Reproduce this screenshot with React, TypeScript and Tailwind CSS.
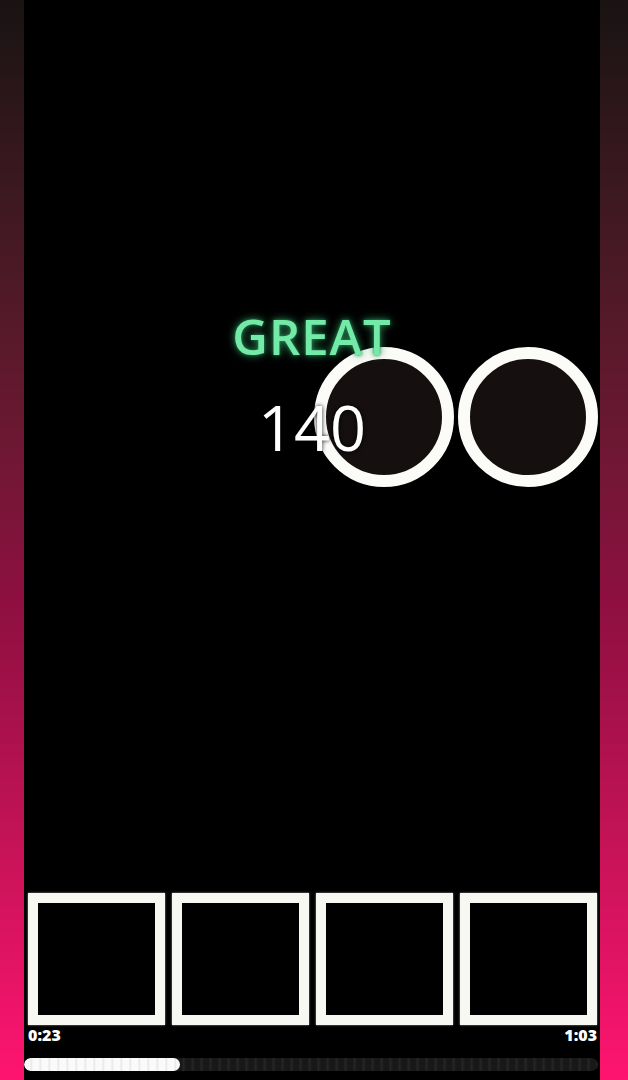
export default function App() {
  const squares = [0, 1, 2, 3];

  return (
    <div className="flex h-[1080px] w-full bg-black" style={{ fontFamily: "'Open Sans', 'Liberation Sans', sans-serif" }}>
      <div className="w-[24px] shrink-0 bg-gradient-to-b from-[#191313] via-[#8c0f3f] via-55% to-[#ff1470]" />

      <div className="flex min-w-0 flex-1 flex-col bg-black">
        {/* play field */}
        <div className="relative flex-1">
          <div className="absolute left-[290px] top-[347px] h-[140px] w-[140px] rounded-full border-[12px] border-[#fbfbf7] bg-[#150f0f]" />
          <div className="absolute left-[434px] top-[347px] h-[140px] w-[140px] rounded-full border-[12px] border-[#fbfbf7] bg-[#150f0f]" />

          <div className="relative z-10 flex flex-col items-center pt-[306px]">
            <div className="text-[49px] font-semibold leading-[60px] tracking-[1px] text-[#74eaa8] [text-shadow:0_0_8px_#2f9d62,0_0_3px_#1f6b43]">
              GREAT
            </div>
            <div className="mt-[26px] text-[63px] font-normal leading-[70px] text-white [text-shadow:0_0_4px_rgba(0,0,0,0.9)]">
              140
            </div>
          </div>
        </div>

        {/* hit pads */}
        <div className="flex h-[132px] gap-[7px] pl-[4px] pr-[3px]">
          {squares.map((i) => (
            <div
              key={i}
              className="flex-1 border-[10px] border-[#f8f8f3] bg-black shadow-[0_0_2px_rgba(255,255,255,0.6)]"
            />
          ))}
        </div>

        <div className="flex h-[20px] justify-between pl-[4px] pr-[3px] text-[16px] font-extrabold leading-[20px] text-white">
          <span>0:23</span>
          <span>1:03</span>
        </div>

        {/* progress */}
        <div className="mr-[2px] mt-[13px] mb-[9px] h-[13px] overflow-hidden rounded-full bg-[repeating-linear-gradient(90deg,#181818_0px,#181818_5px,#272727_6px,#181818_9px)]">
          <div className="h-full w-[156px] rounded-full bg-[repeating-linear-gradient(90deg,#fafafa_0px,#fafafa_6px,#e6e6e6_7px,#fafafa_9px)]" />
        </div>
      </div>

      <div className="w-[28px] shrink-0 bg-gradient-to-b from-[#191313] via-[#8c0f3f] via-55% to-[#ff1470]" />
    </div>
  );
}
